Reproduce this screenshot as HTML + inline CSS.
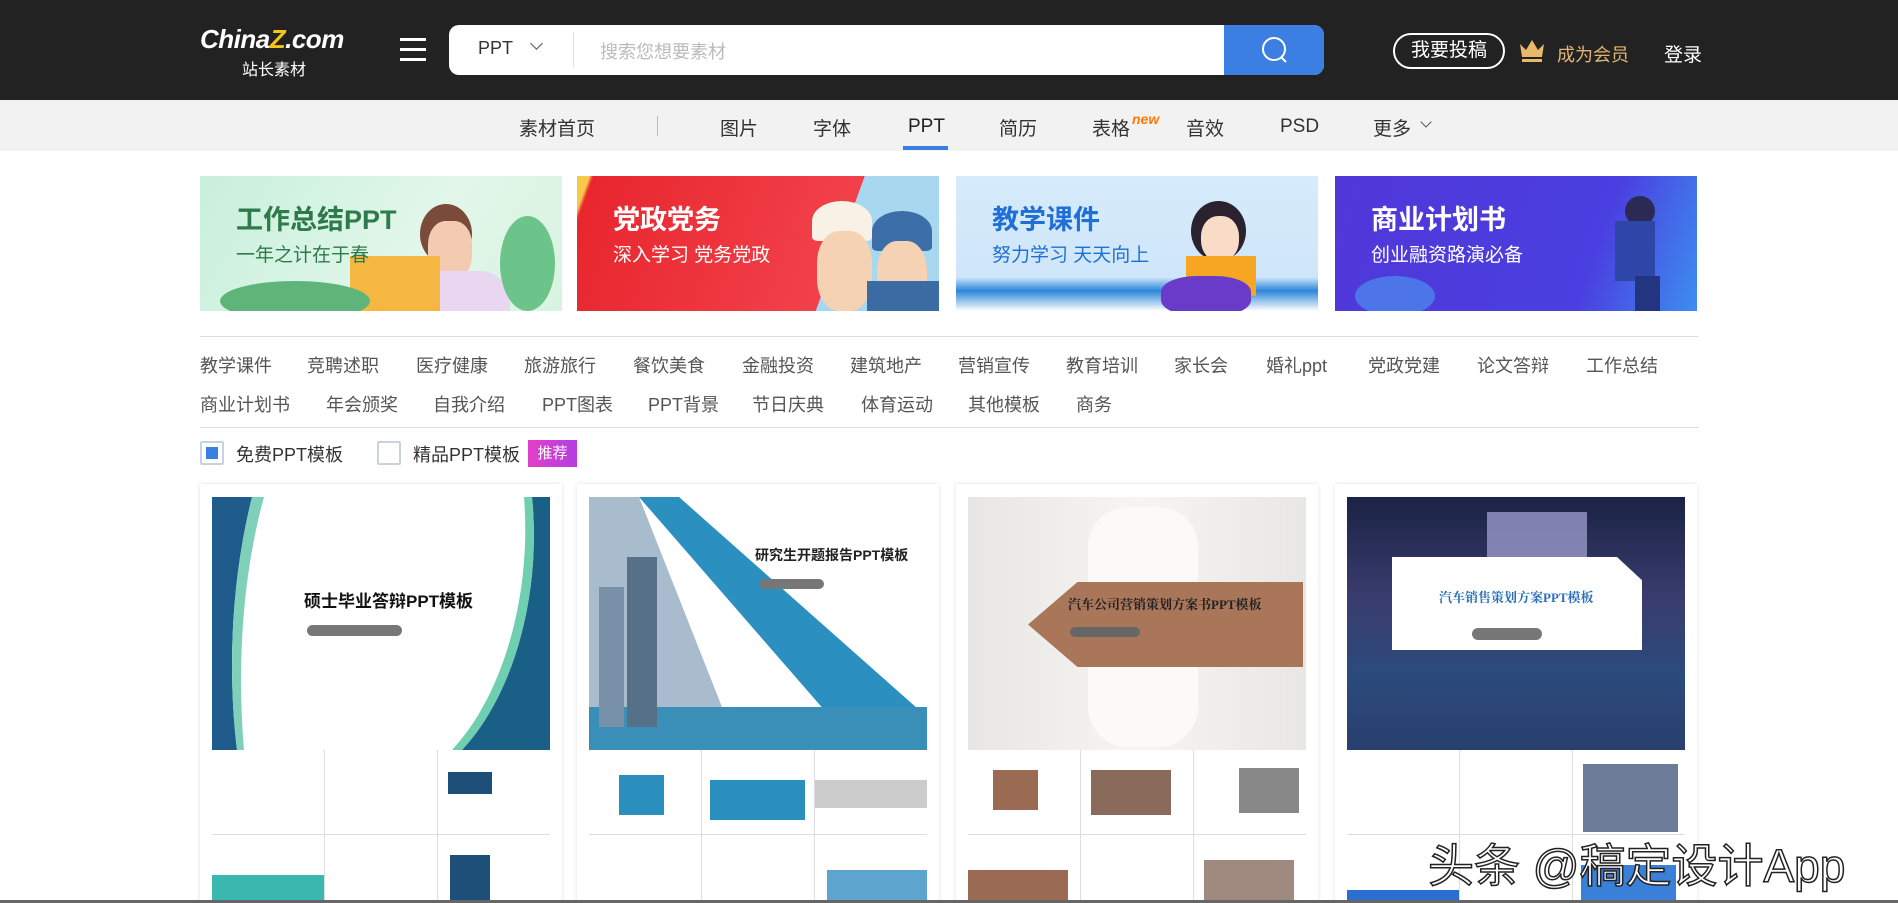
<!DOCTYPE html>
<html style="overflow:hidden;height:903px"><head><meta charset="utf-8"><style>
*{margin:0;padding:0;box-sizing:border-box}
html,body{overflow:hidden}
body{width:1898px;height:903px;background:#fff;font-family:"Liberation Sans","Noto Sans CJK SC",sans-serif;color:#333}
#w{position:relative;width:1898px;height:903px;overflow:hidden}
.abs{position:absolute}
.hdr{left:0;top:0;width:1898px;height:100px;background:#222}
.nav{left:0;top:100px;width:1898px;height:51px;background:#f2f2f2}
.nav span{position:absolute;top:14px;font-size:19px;color:#333}
.ban{top:176px;height:135px;width:362px;overflow:hidden}
.ban b{position:absolute;left:36px;top:22px;font-size:27px;font-weight:bold}
.ban i{position:absolute;left:36px;top:64px;font-size:19px;font-style:normal}
.cat{font-size:18px;color:#555;position:absolute}
.card{top:484px;width:362px;height:419px;background:#fff;box-shadow:0 0 4px rgba(0,0,0,.12);overflow:hidden}
.cov{position:absolute;left:12px;top:13px;width:338px;height:253px;overflow:hidden}
.grid{position:absolute;left:12px;top:266px;width:338px;height:160px;display:grid;grid-template-columns:1fr 1fr 1fr;grid-template-rows:84px 84px;gap:1px;background:#ddd;overflow:hidden}
.grid div{background:#fff;position:relative;overflow:hidden}
</style></head><body><div id="w">
<div class="abs hdr"></div>
<div class="abs" style="left:200px;top:24px;color:#fff;font-size:26px;font-weight:bold;font-style:italic;letter-spacing:-0.5px">China<span style="color:#f5c518">Z</span>.com</div>
<div class="abs" style="left:242px;top:56px;color:#fff;font-size:16px">站长素材</div>
<div class="abs" style="left:400px;top:38px;width:26px;height:3px;background:#fff;box-shadow:0 10px 0 #fff,0 20px 0 #fff"></div>
<div class="abs" style="left:449px;top:25px;width:875px;height:50px;background:#fff;border-radius:10px;overflow:hidden">
 <div class="abs" style="left:29px;top:13px;font-size:18px;color:#333">PPT</div>
 <div class="abs" style="left:83px;top:14px;width:9px;height:9px;border-right:1.5px solid #555;border-bottom:1.5px solid #555;transform:rotate(45deg)"></div>
 <div class="abs" style="left:124px;top:8px;width:1px;height:34px;background:#ddd"></div>
 <div class="abs" style="left:151px;top:13px;font-size:18px;color:#bbb">搜索您想要素材</div>
 <div class="abs" style="left:775px;top:0;width:100px;height:50px;background:#3b7fe3">
  <svg width="100" height="50"><circle cx="50" cy="24" r="11" fill="none" stroke="#fff" stroke-width="2"/><line x1="57" y1="32" x2="62" y2="37" stroke="#fff" stroke-width="2"/></svg>
 </div>
</div>
<div class="abs" style="left:1393px;top:33px;width:112px;height:36px;border:2px solid #fff;border-radius:18px;color:#fff;font-size:19px;text-align:center;line-height:32px">我要投稿</div>
<svg class="abs" style="left:1518px;top:38px" width="28" height="26"><path d="M2 6 L8 12 L14 2 L20 12 L26 6 L24 19 L4 19 Z" fill="#e8b96b"/><rect x="4" y="21" width="20" height="3" fill="#e8b96b"/></svg>
<div class="abs" style="left:1557px;top:41px;color:#e0b573;font-size:18px">成为会员</div>
<div class="abs" style="left:1664px;top:40px;color:#fff;font-size:19px">登录</div>
<div class="abs nav">
<span style="left:519px">素材首页</span>
<div class="abs" style="left:657px;top:16px;width:1px;height:20px;background:#bbb"></div>
<span style="left:720px">图片</span><span style="left:813px">字体</span><span style="left:908px;color:#222;top:16px">PPT</span>
<div class="abs" style="left:903px;top:46px;width:45px;height:4px;background:#3b7fe3"></div>
<span style="left:999px">简历</span><span style="left:1092px">表格</span>
<span style="left:1132px;top:11px;font-size:14px;font-weight:bold;font-style:italic;color:#ff7a00">new</span>
<span style="left:1186px">音效</span><span style="left:1280px;top:16px">PSD</span><span style="left:1373px">更多</span>
<div class="abs" style="left:1422px;top:18px;width:8px;height:8px;border-right:1.5px solid #555;border-bottom:1.5px solid #555;transform:rotate(45deg)"></div>
</div>

<div class="abs ban" style="left:200px;background:linear-gradient(120deg,#c8f0dc,#e2f7ea 60%,#d8f3e0)">
 <div class="abs" style="left:220px;top:28px;width:52px;height:60px;border-radius:50%;background:#7a4a3a"></div>
 <div class="abs" style="left:228px;top:45px;width:44px;height:58px;border-radius:40%;background:#f3cbb3"></div>
 <div class="abs" style="left:200px;top:95px;width:110px;height:50px;border-radius:30px 30px 0 0;background:#e9d6f0"></div>
 <div class="abs" style="left:150px;top:80px;width:90px;height:55px;background:#f5b642"></div>
 <div class="abs" style="left:20px;top:105px;width:150px;height:40px;border-radius:50%;background:#5fb47a"></div>
 <div class="abs" style="left:300px;top:40px;width:55px;height:95px;border-radius:50%;background:#6cc48a"></div>
 <b style="color:#2f7a4a">工作总结PPT</b><i style="color:#2f7a4a">一年之计在于春</i></div>
<div class="abs ban" style="left:577px;background:linear-gradient(110deg,#f7c84a 0 3%,#e8262e 4%,#f2414a 70%,#a8d8f0 70%)">
 <div class="abs" style="left:235px;top:25px;width:60px;height:40px;border-radius:50% 50% 10% 10%;background:#f8f2e6"></div>
 <div class="abs" style="left:240px;top:55px;width:55px;height:80px;border-radius:40%;background:#f6d2b4"></div>
 <div class="abs" style="left:295px;top:35px;width:60px;height:40px;border-radius:50% 50% 10% 10%;background:#3c6fa8"></div>
 <div class="abs" style="left:300px;top:65px;width:50px;height:75px;border-radius:40%;background:#f6d2b4"></div>
 <div class="abs" style="left:290px;top:105px;width:72px;height:40px;background:#3a6ba3"></div>
 <b style="color:#fff">党政党务</b><i style="color:#fff">深入学习 党务党政</i></div>
<div class="abs ban" style="left:956px;background:linear-gradient(180deg,#d6ecfb,#cfe6fa 75%,#2c86d8 85%,#ffffff)">
 <div class="abs" style="left:235px;top:25px;width:55px;height:60px;border-radius:50%;background:#2b2230"></div>
 <div class="abs" style="left:245px;top:40px;width:38px;height:45px;border-radius:45%;background:#f8dcc8"></div>
 <div class="abs" style="left:230px;top:80px;width:70px;height:40px;background:#f6a623"></div>
 <div class="abs" style="left:205px;top:100px;width:90px;height:40px;border-radius:40%;background:#6a3bc8"></div>
 <b style="color:#1f6fd6">教学课件</b><i style="color:#1f6fd6">努力学习 天天向上</i></div>
<div class="abs ban" style="left:1335px;background:linear-gradient(110deg,#5037d8,#4a3fe0 70%,#3d8ef0)">
 <div class="abs" style="left:290px;top:20px;width:30px;height:30px;border-radius:50%;background:#2b2a55"></div>
 <div class="abs" style="left:280px;top:45px;width:40px;height:60px;background:#2e46a8"></div>
 <div class="abs" style="left:300px;top:100px;width:25px;height:35px;background:#23357f"></div>
 <div class="abs" style="left:20px;top:100px;width:80px;height:40px;border-radius:50%;background:#4d8ef0;opacity:.7"></div>
 <b style="color:#fff">商业计划书</b><i style="color:#fff">创业融资路演必备</i></div>

<div class="abs" style="left:200px;top:336px;width:1498px;height:1px;background:#ddd"></div>
<div class="cat" style="left:200px;top:352px">教学课件</div><div class="cat" style="left:307px;top:352px">竞聘述职</div><div class="cat" style="left:416px;top:352px">医疗健康</div><div class="cat" style="left:524px;top:352px">旅游旅行</div><div class="cat" style="left:633px;top:352px">餐饮美食</div><div class="cat" style="left:742px;top:352px">金融投资</div><div class="cat" style="left:850px;top:352px">建筑地产</div><div class="cat" style="left:958px;top:352px">营销宣传</div><div class="cat" style="left:1066px;top:352px">教育培训</div><div class="cat" style="left:1174px;top:352px">家长会</div><div class="cat" style="left:1266px;top:352px">婚礼ppt</div><div class="cat" style="left:1368px;top:352px">党政党建</div><div class="cat" style="left:1477px;top:352px">论文答辩</div><div class="cat" style="left:1586px;top:352px">工作总结</div>
<div class="cat" style="left:200px;top:391px">商业计划书</div><div class="cat" style="left:326px;top:391px">年会颁奖</div><div class="cat" style="left:433px;top:391px">自我介绍</div><div class="cat" style="left:542px;top:391px">PPT图表</div><div class="cat" style="left:648px;top:391px">PPT背景</div><div class="cat" style="left:752px;top:391px">节日庆典</div><div class="cat" style="left:861px;top:391px">体育运动</div><div class="cat" style="left:968px;top:391px">其他模板</div><div class="cat" style="left:1076px;top:391px">商务</div>
<div class="abs" style="left:200px;top:427px;width:1498px;height:1px;background:#ddd"></div>
<div class="abs" style="left:200px;top:441px;width:24px;height:24px;border:2px solid #c8d3e0;border-radius:2px"><div style="margin:4px;width:12px;height:12px;background:#3b7fe3"></div></div>
<div class="cat" style="left:236px;top:441px;color:#333">免费PPT模板</div>
<div class="abs" style="left:377px;top:441px;width:24px;height:24px;border:2px solid #c8d3e0;border-radius:2px"></div>
<div class="cat" style="left:413px;top:441px;color:#333">精品PPT模板</div>
<div class="abs" style="left:528px;top:440px;width:49px;height:27px;background:linear-gradient(90deg,#e23fc8,#b43fe0);color:#fff;font-size:15px;text-align:center;line-height:27px">推荐</div>

<div class="abs card" style="left:200px"><div class="cov" style="background:#fff">
 <svg width="338" height="253"><path d="M0 0 L40 0 C20 80 15 170 25 253 L0 253Z" fill="#1f5b8a"/><path d="M40 0 L52 0 C30 80 25 170 32 253 L25 253 C15 170 20 80 40 0Z" fill="#7fd0b8"/><path d="M338 0 L320 0 C330 100 300 200 250 253 L338 253Z" fill="#1a5f86"/><path d="M320 0 L312 0 C320 100 290 200 240 253 L250 253 C300 200 330 100 320 0Z" fill="#6fcfb0"/></svg>
 <div class="abs" style="left:92px;top:90px;font-size:17px;font-weight:bold;color:#111">硕士毕业答辩PPT模板</div>
 <div class="abs" style="left:95px;top:128px;width:95px;height:11px;background:#777;border-radius:6px"></div>
</div><div class="grid"><div></div><div></div><div><div class="abs" style="left:10px;top:22px;width:44px;height:22px;background:#1d4f78"></div></div><div><div class="abs" style="left:0;top:40px;width:112px;height:44px;background:#3ab8b0"></div></div><div></div><div><div class="abs" style="left:12px;top:20px;width:40px;height:64px;background:#1d4f78"></div><div class="abs" style="left:52px;top:20px;width:40px;height:64px;background:#8ac8d8"></div></div></div></div>

<div class="abs card" style="left:577px"><div class="cov" style="background:linear-gradient(180deg,#fff,#eef6fb)">
 <svg width="338" height="253"><rect x="0" y="0" width="338" height="253" fill="#fff"/><path d="M0 0 L50 0 L150 253 L0 253Z" fill="#a9bccd"/><path d="M50 0 L90 0 L338 220 L338 253 L270 253Z" fill="#2b8fc0"/><rect x="0" y="210" width="338" height="43" fill="#3a8fb8"/><rect x="38" y="60" width="30" height="170" fill="#56708a"/><rect x="10" y="90" width="25" height="140" fill="#7890a8"/></svg>
 <div class="abs" style="left:166px;top:48px;font-size:14px;font-weight:bold;color:#222">研究生开题报告PPT模板</div>
 <div class="abs" style="left:170px;top:82px;width:65px;height:10px;background:#777;border-radius:5px"></div>
</div><div class="grid"><div><div class="abs" style="left:30px;top:25px;width:45px;height:40px;background:#2a8fbf"></div></div><div><div class="abs" style="left:8px;top:30px;width:95px;height:40px;background:#2a8fbf"></div></div><div><div class="abs" style="left:0;top:30px;width:112px;height:28px;background:#ccc"></div></div><div></div><div></div><div><div class="abs" style="left:12px;top:35px;width:100px;height:38px;background:#5da5cf"></div></div></div></div>

<div class="abs card" style="left:956px"><div class="cov" style="background:linear-gradient(90deg,#e8e6e3,#f7f5f2 50%,#e9e7e4)">
 <div class="abs" style="left:120px;top:10px;width:110px;height:240px;background:#fbfaf8;border-radius:40px"></div>
 <div class="abs" style="left:60px;top:85px;width:275px;height:85px;background:#a9765a;clip-path:polygon(18% 0,100% 0,100% 100%,18% 100%,0 50%)"></div>
 <div class="abs" style="left:100px;top:97px;font-size:13px;font-weight:bold;color:#222;font-family:'Liberation Serif','Noto Serif CJK SC',serif">汽车公司营销策划方案书PPT模板</div>
 <div class="abs" style="left:102px;top:130px;width:70px;height:10px;background:#666;border-radius:5px"></div>
</div><div class="grid"><div><div class="abs" style="left:25px;top:20px;width:45px;height:40px;background:#9a6a52"></div></div><div><div class="abs" style="left:10px;top:20px;width:80px;height:45px;background:#8a6a5a"></div></div><div><div class="abs" style="left:45px;top:18px;width:60px;height:45px;background:#888"></div></div><div><div class="abs" style="left:0;top:35px;width:100px;height:45px;background:#9a6a52"></div></div><div></div><div><div class="abs" style="left:10px;top:25px;width:90px;height:50px;background:#a08a80"></div></div></div></div>

<div class="abs card" style="left:1335px"><div class="cov" style="background:linear-gradient(180deg,#1a2344,#3a3c6e 40%,#2c4a7c 70%,#274070)">
 <div class="abs" style="left:140px;top:15px;width:100px;height:80px;background:#a8a6d8;opacity:.7"></div>
 <div class="abs" style="left:45px;top:60px;width:250px;height:93px;background:#fff;clip-path:polygon(0 0,90% 0,100% 25%,100% 100%,0 100%)"></div>
 <div class="abs" style="left:92px;top:90px;font-size:13px;font-weight:bold;color:#2a6fb8;font-family:'Liberation Serif','Noto Serif CJK SC',serif">汽车销售策划方案PPT模板</div>
 <div class="abs" style="left:125px;top:131px;width:70px;height:12px;background:#777;border-radius:6px"></div>
</div><div class="grid"><div></div><div></div><div><div class="abs" style="left:10px;top:14px;width:95px;height:68px;background:#6a7c98"></div></div><div><div class="abs" style="left:0;top:55px;width:112px;height:30px;background:#2a6fd0"></div></div><div></div><div><div class="abs" style="left:8px;top:30px;width:95px;height:50px;background:#3a7fd8"></div></div></div></div>

<div class="abs" style="left:1428px;top:830px;font-size:46px;color:#fff;-webkit-text-stroke:1.5px #222;white-space:nowrap">头条 @稿定设计App</div>
<div class="abs" style="left:0;top:900px;width:1898px;height:3px;background:#666"></div>
</div></body></html>
